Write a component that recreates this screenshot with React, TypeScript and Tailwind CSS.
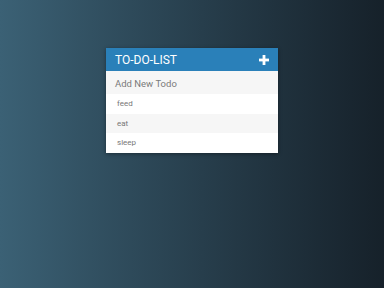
import React from "react";

export default function App() {
  const todos = ["feed", "eat", "sleep"];
  return (
    <div
      className="w-[384px] h-[288px] bg-gradient-to-r from-[#3b6175] to-[#16212a] flex justify-center pt-[48px]"
      style={{ fontFamily: "Roboto, 'Liberation Sans', sans-serif" }}
    >
      <div className="w-[172px] h-[105px] flex flex-col shadow-[0_1px_4px_rgba(0,0,0,0.4)]">
        <div className="h-[23px] bg-[#2a80b9] flex items-center justify-between pl-[9px] pr-[9px]">
          <span className="text-white text-[12px] leading-none pt-[1px]">TO-DO-LIST</span>
          <svg width="10" height="10" viewBox="0 0 10 10">
            <rect x="3.6" y="0" width="2.8" height="10" fill="#fff" />
            <rect x="0" y="3.6" width="10" height="2.8" fill="#fff" />
          </svg>
        </div>
        <div className="h-[23px] bg-[#f6f6f6] flex items-center pl-[9px] pt-[2px]">
          <span className="text-[#7a7a7a] text-[9.5px] leading-none">Add New Todo</span>
        </div>
        {todos.map((t, i) => (
          <div
            key={t}
            className={
              "h-[19.5px] flex items-center pl-[11px] pt-[1px] " +
              (i % 2 === 1 ? "bg-[#f6f6f6]" : "bg-white")
            }
          >
            <span className="text-[#777777] text-[8px] leading-none">{t}</span>
          </div>
        ))}
      </div>
    </div>
  );
}
